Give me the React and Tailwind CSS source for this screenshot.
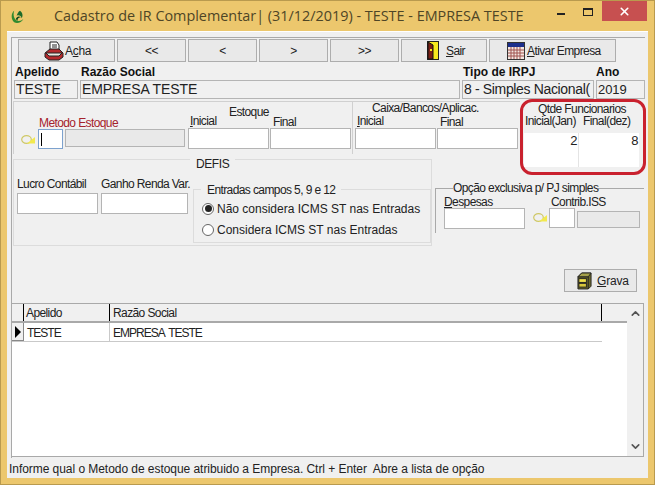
import { X, ChevronUp, ChevronDown } from "lucide-react";

const font = { fontFamily: '"Liberation Sans", Arial, sans-serif' };

/* ---------- icons ---------- */

const Logo = () => (
  <svg width="15" height="15" viewBox="0 0 18 18">
    <path d="M5 2C1 5 1 12 5 16C9 18 14 16 16 12C13 15 8 15 6 12C4 9 4 5 5 2Z" fill="#2f8a2f" />
    <path d="M12 2C15 4 16 8 14 11C13 8 11 7 8 8C9 5 10 3 12 2Z" fill="#1c6b2a" />
    <path d="M7 12C8 9 11 8 13 10C11 10 9 11 9 14Z" fill="#0f4a1d" />
  </svg>
);

const PrinterIcon = () => (
  <svg width="20" height="20" viewBox="0 0 20 20">
    <path d="M6 1H13L15 4V9H6Z" fill="#fff" stroke="#222" />
    <path d="M8 4H13M8 6H13" stroke="#222" />
    <path d="M1 12L6 8H15L19 12V16L15 19H5L1 16Z" fill="#b5282b" stroke="#222" />
    <path d="M2 12H18L15 15H5Z" fill="#e9e4dc" stroke="#222" />
  </svg>
);

const DoorIcon = () => (
  <svg width="12" height="19" viewBox="0 0 12 19">
    <rect x="0.5" y="0.5" width="11" height="18" fill="#f6e81e" stroke="#222" />
    <path d="M1 1L6 4V18H1Z" fill="#7a1f14" stroke="#111" />
    <rect x="3" y="8" width="2" height="2" fill="#f6e81e" />
  </svg>
);

const CalendarIcon = () => (
  <svg width="18" height="18" viewBox="0 0 18 18">
    <rect x="0.5" y="0.5" width="17" height="17" fill="#f3e6e0" stroke="#333" />
    <rect x="1" y="1" width="16" height="4" fill="#1c2f8c" />
    <path d="M1 8H17M1 11H17M1 14H17M4 5V17M7 5V17M10 5V17M13 5V17" stroke="#a0524f" strokeWidth="1" />
  </svg>
);

const SafeIcon = () => (
  <svg width="15" height="18" viewBox="0 0 16 19">
    <path d="M1 5L5 1H15V15L12 18H1Z" fill="#6d6a2c" stroke="#222" />
    <path d="M1 5H12V18" fill="none" stroke="#222" />
    <rect x="2" y="7" width="8" height="4" fill="#f0e04a" stroke="#222" />
    <rect x="2" y="12" width="8" height="4" fill="#d8c83c" stroke="#222" />
    <path d="M5 1H15L12 5H1Z" fill="#a5a14a" stroke="#222" />
  </svg>
);

const LookupIcon = () => (
  <svg width="15" height="9" viewBox="0 0 15 9" className="shrink-0">
    <ellipse cx="5.5" cy="4.5" rx="4.8" ry="3.8" fill="none" stroke="#cfc866" strokeWidth="1.2" />
    <path d="M6 8.5L14 2V8.5Z" fill="#f2e94e" />
  </svg>
);

/* ---------- small parts ---------- */

const Btn = ({ w, className = "justify-center", children }) => (
  <div className={`${w} h-[23px] flex items-center border border-[#adadad] bg-[#e9e9e9] text-[12px] text-[#222] ${className}`}>
    {children}
  </div>
);

const Field = ({ w, h = "h-[21px]", className = "", children }) => (
  <div className={`${w} ${h} shrink-0 border border-[#b4b4b4] bg-white ${className}`}>{children}</div>
);

const U = ({ children }) => <span className="underline">{children}</span>;

const Radio = ({ on, label }) => (
  <div className="flex items-center gap-[3px] h-[21px] tracking-normal whitespace-nowrap">
    <div className="w-[12px] h-[12px] ml-[1px] rounded-full border border-[#666] bg-white flex items-center justify-center">
      {on && <div className="w-[7px] h-[7px] rounded-full bg-[#222]" />}
    </div>
    <span>{label}</span>
  </div>
);

export default function App() {
  return (
    <div style={font} className="relative w-[655px] h-[487px] overflow-hidden bg-white text-[12px] leading-[14px] tracking-[-0.6px] text-[#222]">
      <div className="w-[655px] h-[485px] bg-[#ecc76d] border border-[#b99a4e] flex flex-col">

        {/* TITLE BAR */}
        <div className="h-[30px] shrink-0 flex items-center">
          <div className="ml-[9px] w-[15px] leading-[0]"><Logo /></div>
          <div style={{ fontFamily: '"Open Sans", sans-serif' }} className="ml-[29px] text-[14.4px] tracking-normal text-[#4e4526] whitespace-nowrap">
            Cadastro de IR Complementar| (31/12/2019) - TESTE - EMPRESA TESTE
          </div>
          <div className="ml-auto flex items-start h-full">
            <div className="mt-[12px] mr-[18px] w-[8px] h-[2px] bg-[#222]" />
            <div className="mt-[7px] mr-[9px] w-[10px] h-[8px] border border-t-2 border-[#222]" />
            <div className="w-[45px] h-[20px] mr-[7px] bg-[#c75050] flex items-center justify-center">
              <X size={13} strokeWidth={3} className="text-white" />
            </div>
          </div>
        </div>

        {/* CLIENT AREA */}
        <div className="ml-[6px] w-[641px] h-[447px] bg-[#f0f0f0] border-t border-[#fff] flex flex-col">
          <div className="ml-[4px] mt-[5px] w-[634px] h-[421px] border-l border-t border-[#a9a9a9] flex flex-col">

            {/* TOOLBAR */}
            <div className="flex mt-[1px] ml-[6px] gap-[2px]">
              <Btn w="w-[97px]" className="pl-[25px]">
                <PrinterIcon />
                <span className="ml-[1px] tracking-[-0.3px]">A<U>c</U>ha</span>
              </Btn>
              <Btn w="w-[69px]">&lt;&lt;</Btn>
              <Btn w="w-[69px]">&lt;</Btn>
              <Btn w="w-[69px]">&gt;</Btn>
              <Btn w="w-[69px]">&gt;&gt;</Btn>
              <Btn w="w-[86px]" className="pl-[25px]">
                <DoorIcon />
                <span className="ml-[7px]"><U>S</U>air</span>
              </Btn>
              <Btn w="w-[127px]" className="pl-[17px]">
                <CalendarIcon />
                <span className="ml-[2px]"><U>A</U>tivar Empresa</span>
              </Btn>
            </div>

            {/* APELIDO ROW */}
            <div className="flex mt-[2px] ml-[3px] font-bold h-[16px] items-center whitespace-nowrap tracking-normal text-[#111]">
              <span className="w-[66px]">Apelido</span>
              <span className="w-[382px]">Razão Social</span>
              <span className="w-[133px]">Tipo de IRPJ</span>
              <span>Ano</span>
            </div>
            <div className="flex ml-[2px] gap-[2px] text-[14px] leading-[17px] tracking-[-0.1px]">
              <Field w="w-[64px]" h="h-[19px]" className="!bg-[#f0f0f0] pl-[1px]">TESTE</Field>
              <Field w="w-[380px]" h="h-[19px]" className="!bg-[#f0f0f0] pl-[1px]">EMPRESA TESTE</Field>
              <Field w="w-[132px]" h="h-[19px]" className="!bg-[#f0f0f0] pl-[1px] whitespace-nowrap overflow-hidden tracking-[-0.35px]">8 - Simples Nacional(</Field>
              <Field w="w-[49px]" h="h-[19px]" className="!bg-[#f0f0f0] pl-[1px] text-[13px]">2019</Field>
            </div>

            {/* ESTOQUE / CAIXA / FUNCIONARIOS */}
            <div className="flex mt-[2px] ml-[1px] h-[53px] leading-[12px]">
              <div className="w-[339px] border-l border-t border-[#d0d0d0] flex items-end pb-[5px]">
                <div className="w-[174px] flex flex-col">
                  <span className="ml-[25px] text-[#a5222c]">Metodo Estoque</span>
                  <div className="flex items-start ml-[7px]">
                    <div className="mt-[6px] leading-[0]"><LookupIcon /></div>
                    <div className="ml-[2px] w-[25px] h-[20px] shrink-0 border border-[#7da2ce] bg-white flex items-center pl-[2px]">
                      <div className="w-px h-[13px] bg-black" />
                    </div>
                    <Field w="w-[120px]" h="h-[18px]" className="ml-[2px] !bg-[#e9e9e9]" />
                  </div>
                </div>
                <div className="flex flex-col">
                  <div className="relative h-[26px] w-[163px]">
                    <span className="absolute left-[41px] top-[4px]">Estoque</span>
                    <span className="absolute left-[2px] bottom-[1px]"><U>I</U>nicial</span>
                    <span className="absolute left-[85px] bottom-0">Final</span>
                  </div>
                  <div className="flex gap-[1px]">
                    <Field w="w-[81px]" />
                    <Field w="w-[81px]" />
                  </div>
                </div>
              </div>
              <div className="w-[168px] border-l border-t border-[#d0d0d0] flex flex-col justify-end pb-[5px]">
                <div className="relative h-[26px]">
                  <span className="absolute left-[19px] top-0 whitespace-nowrap">Caixa/Bancos/Aplicac.</span>
                  <span className="absolute left-[4px] bottom-[1px]"><U>I</U>nicial</span>
                  <span className="absolute left-[87px] bottom-0">Final</span>
                </div>
                <div className="flex gap-[1px] ml-[2px]">
                  <Field w="w-[81px]" />
                  <Field w="w-[81px]" />
                </div>
              </div>
              <div className="w-[121px] flex flex-col leading-[11px]">
                <span className="ml-[18px] mt-[3px] whitespace-nowrap">Qtde Funcionarios</span>
                <div className="flex ml-[5px] mt-[1px] whitespace-nowrap">
                  <span className="w-[58px]">Inicial(Jan)</span>
                  <span>Final(dez)</span>
                </div>
              </div>
            </div>

            {/* DEFIS + OPCAO */}
            <div className="flex ml-[1px] mt-[5px] items-start">
              <div className="relative w-[419px] h-[87px] border border-[#dcdcdc] shrink-0">
                <span className="absolute left-[176px] -top-[3px] px-[6px] bg-[#f0f0f0] tracking-[-0.4px]">DEFIS</span>
                <div className="flex mt-[17px] ml-[3px]">
                  <div className="flex flex-col w-[84px]">
                    <span className="whitespace-nowrap">Lucro Contábil</span>
                    <Field w="w-[81px]" className="mt-[2px]" />
                  </div>
                  <div className="flex flex-col w-[92px]">
                    <span className="whitespace-nowrap">Ganho Renda Var.</span>
                    <Field w="w-[87px]" className="mt-[2px]" />
                  </div>
                </div>
                <div className="absolute left-[179px] top-[29px] w-[238px] h-[54px] border border-[#dcdcdc] pl-[7px]">
                  <span className="absolute left-[7px] -top-[7px] px-[6px] bg-[#f0f0f0] whitespace-nowrap">Entradas campos 5, 9 e 12</span>
                  <div className="pt-[8px]">
                    <Radio on label="Não considera ICMS ST nas Entradas" />
                    <Radio label="Considera ICMS ST nas Entradas" />
                  </div>
                </div>
              </div>

              <div className="relative ml-[3px] mt-[29px] w-[209px] h-[45px] border-l border-t border-[#a9a9a9]">
                <span className="absolute left-[17px] -top-[8px] bg-[#f0f0f0] whitespace-nowrap">Opção exclusiva p/ PJ simples</span>
                <div className="flex mt-[6px] ml-[8px] h-[13px] whitespace-nowrap">
                  <span className="w-[107px]"><U>D</U>espesas</span>
                  <span>Contrib.ISS</span>
                </div>
                <div className="flex items-start ml-[8px]">
                  <Field w="w-[81px]" />
                  <div className="ml-[8px] mt-[5px] leading-[0]"><LookupIcon /></div>
                  <Field w="w-[26px]" h="h-[20px]" className="ml-[1px]" />
                  <Field w="w-[63px]" h="h-[17px]" className="ml-[2px] mt-[3px] !bg-[#e9e9e9]" />
                </div>
              </div>
            </div>

            {/* GRAVA */}
            <div className="flex justify-end mt-[23px] mr-[8px]">
              <Btn w="w-[73px]" className="pl-[12px]">
                <SafeIcon />
                <span className="ml-[5px] tracking-[-0.2px]"><U>G</U>rava</span>
              </Btn>
            </div>

            {/* GRID */}
            <div className="relative mt-[11px] -ml-[1px] w-[633px] h-[154px] shrink-0 border border-[#a9a9a9] bg-white flex">
              <div className="flex-1 flex flex-col">
                <div className="flex h-[19px] bg-[#f0f0f0] border-b-2 border-[#a9a9a9]">
                  <div className="w-[12px] border-r border-black" />
                  <div className="w-[86px] pl-[2px] border-r border-black leading-[18px]">Apelido</div>
                  <div className="w-[492px] pl-[3px] border-r border-black leading-[18px]">Razão Social</div>
                </div>
                <div className="flex h-[19px] border-b border-[#c9c9c9] w-[590px] leading-[20px] tracking-[-1px] [word-spacing:2px]">
                  <div className="w-[12px] bg-[#f0f0f0] border-r border-b border-[#888] flex items-center justify-center">
                    <div className="w-0 h-0 border-y-[6px] border-y-transparent border-l-[6px] border-l-black" />
                  </div>
                  <div className="w-[86px] pl-[3px] border-r border-[#c9c9c9]">TESTE</div>
                  <div className="pl-[3px]">EMPRESA TESTE</div>
                </div>
              </div>
              <div className="w-[16px] bg-[#f0f0f0] flex flex-col items-center justify-between py-[3px] text-[#555]">
                <ChevronUp size={13} strokeWidth={3} />
                <ChevronDown size={13} strokeWidth={3} />
              </div>
            </div>
          </div>

          {/* STATUS BAR */}
          <div className="mt-[4px] ml-[2px] whitespace-nowrap tracking-[-0.05px]">
            Informe qual o Metodo de estoque atribuido a Empresa. Ctrl + Enter&nbsp; Abre a lista de opção
          </div>
        </div>
      </div>

      {/* RED ANNOTATION OVER THE FORM */}
      <div className="absolute left-[520px] top-[99px] w-[126px] h-[76px] rounded-[12px] border-[3px] border-[#c9212e]">
        <div className="absolute left-[1px] top-[31px] w-[115px] h-[34px] bg-white flex text-[13px] text-[#222]">
          <div className="w-[55px] text-right pr-[1px] pt-[1px] border-r border-[#e4e4e4]">2</div>
          <div className="flex-1 text-right pt-[1px] pr-[1px]">8</div>
        </div>
      </div>
    </div>
  );
}
